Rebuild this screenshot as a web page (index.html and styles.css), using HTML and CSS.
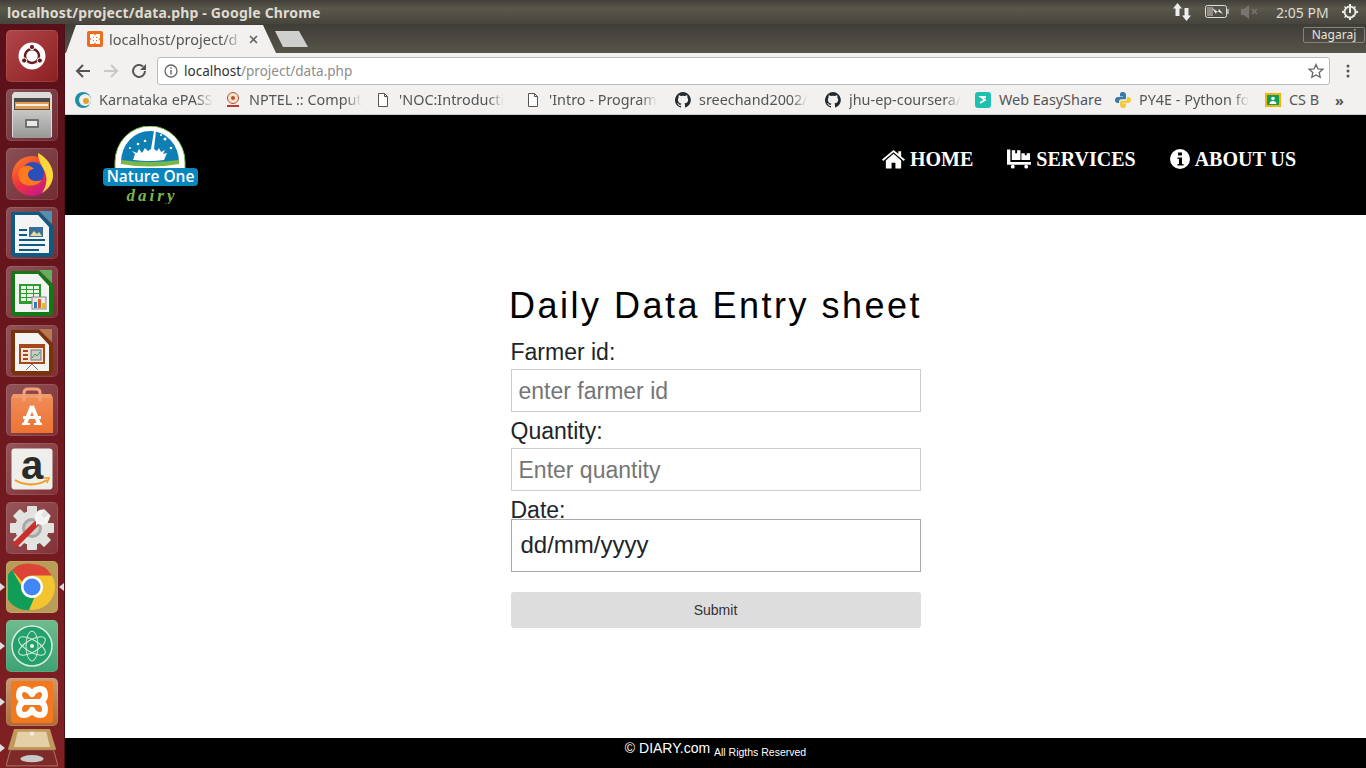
FILE: index.html
```html
<!DOCTYPE html>
<html lang="en">
<head>
  <meta charset="UTF-8" />
  <title>localhost/project/data.php</title>
  <link rel="stylesheet" href="styles.css">
</head>
<body>
  <div class="titlebar">
    <span class="window-title">localhost/project/data.php - Google Chrome</span>
    <div class="tray">
      <svg class="tray-net" width="18" height="18" viewBox="0 0 18 18"><path d="M4.500 0l4.500 5.500H6.500V13h-4V5.500H0zM13.500 18L9 12.500h2.500V5h4v7.500H18z" fill="#eee"/></svg>
      <svg class="tray-batt" width="24" height="14" viewBox="0 0 24 14"><rect x=".5" y=".5" width="21" height="12" rx="2" fill="none" stroke="#ddd"/><rect x="2" y="2" width="6" height="9" fill="#8f8d86"/><path d="M22 4h2v5h-2z" fill="#aaa"/><path d="M7 3l6 4 1-3 4 5-6-3-1 3z" fill="#eee"/></svg>
      <svg class="tray-vol" width="18" height="14" viewBox="0 0 18 14"><path d="M0 4h3l5-4v14l-5-4H0z" fill="#77756e"/><path d="M11 4l5 5m0-5l-5 5" stroke="#77756e" stroke-width="1.500"/></svg>
      <span class="clock">2:05 PM</span>
      <svg class="tray-gear" width="16" height="16" viewBox="0 0 16 16"><circle cx="8" cy="8" r="5.500" fill="none" stroke="#e8e8e8" stroke-width="2"/><path d="M8 3v6" stroke="#e8e8e8" stroke-width="2"/><path d="M7 0h2v3H7zM7 13h2v3H7zM0 7h3v2H0zM13 7h3v2h-3zM2 3l1-1 2 2-1 1zM12 11l1 1-1 1-2-2zM13 2l1 1-2 2-1-1zM4 11l1 1-2 2-1-1z" fill="#e8e8e8"/></svg>
    </div>
  </div>

  <div class="desktop">
    <nav class="launcher">
      <div class="tile tile-home">
        <svg width="40" height="40" viewBox="0 0 40 40"><circle cx="20" cy="20" r="13.500" fill="#fff"/><circle cx="20" cy="20" r="7" fill="none" stroke="#6d1a1f" stroke-width="2.500"/><circle cx="20" cy="11" r="2.600" stroke="#fff" fill="#6d1a1f"/><circle cx="12.200" cy="24.500" r="2.600" stroke="#fff" fill="#6d1a1f"/><circle cx="27.800" cy="24.500" r="2.600" stroke="#fff" fill="#6d1a1f"/></svg>
      </div>
      <div class="tile">
        <svg width="42" height="46" viewBox="0 0 42 46"><defs><linearGradient id="cab" x1="0" y1="0" x2="0" y2="1"><stop offset="0" stop-color="#c8c8c6"/><stop offset="1" stop-color="#989896"/></linearGradient></defs><path d="M3 0h36l2 3v42H1V3z" fill="#dcdcda"/><rect x="3" y="6" width="36" height="12" fill="#4a4a4a"/><rect x="4" y="10" width="34" height="7" fill="#e59a50"/><rect x="5" y="12" width="32" height="2" fill="#f7efe0"/><path d="M2 18h38v28H2z" fill="url(#cab)"/><rect x="14" y="27" width="14" height="9" rx="1" fill="#6f6f6f"/><rect x="16" y="29" width="10" height="5" fill="#e8e8e8"/></svg>
      </div>
      <div class="tile">
        <svg width="44" height="44" viewBox="0 0 44 44"><defs><linearGradient id="fx" x1="0" y1="0" x2=".7" y2="1"><stop offset="0" stop-color="#ff8a1f"/><stop offset=".55" stop-color="#f0343c"/><stop offset="1" stop-color="#c4178a"/></linearGradient></defs><circle cx="22" cy="24" r="20" fill="url(#fx)"/><path d="M28 1c8 4 16 13 15 24-1 8-6 13-11 16 5-8 6-15 2-23-2-4-6-10-6-17z" fill="#ffd73a"/><circle cx="23" cy="21" r="11" fill="#2b4fb8"/><path d="M9 18c6-6 12-5 15-1-3 0-6 2-6 6 0 4 6 8 14 5-4 6-15 8-21 2-3-3-3-8-2-12z" fill="#ff7a1f"/></svg>
      </div>
      <div class="tile">
        <svg width="42" height="48" viewBox="0 0 42 48"><path d="M0 3h28l14 14v28l-3 3H3l-3-3z" fill="#0d5a85"/><path d="M28 2l13 13V2z" fill="#4d92b5"/><path d="M4 6h23l11 12v26H4z" fill="#f4f4f4"/><path d="M8 20h8v2H8zM8 25h8v2H8zM8 30h26v2H8zM8 35h26v2H8zM8 40h20v2H8z" fill="#0d5a85"/><rect x="18" y="18" width="14" height="10" fill="#38709a"/><path d="M19 27l4-5 3 3 2-2 3 4z" fill="#e8d9a0"/></svg>
      </div>
      <div class="tile">
        <svg width="42" height="48" viewBox="0 0 42 48"><path d="M0 3h28l14 14v28l-3 3H3l-3-3z" fill="#107a14"/><path d="M28 2l13 13V2z" fill="#60b060"/><path d="M4 6h23l11 12v26H4z" fill="#f4f4f4"/><path d="M8 16h22v20H8z" fill="#2f9a2f"/><path d="M10 18h5v3h-5zM16 18h6v3h-6zM23 18h5v3h-5zM10 22h5v3h-5zM16 22h6v3h-6zM23 22h5v3h-5zM10 26h5v3h-5zM16 26h6v3h-6zM23 26h5v3h-5zM10 30h5v3h-5zM16 30h6v3h-6z" fill="#eaf5ea"/><rect x="21" y="29" width="14" height="12" fill="#e8e8e8" stroke="#888"/><path d="M23 34h3v6h-3z" fill="#2f7fc0"/><path d="M27 31h3v9h-3z" fill="#d9602a"/><path d="M31 35h3v5h-3z" fill="#e8b82c"/></svg>
      </div>
      <div class="tile">
        <svg width="42" height="48" viewBox="0 0 42 48"><path d="M0 3h28l14 14v28l-3 3H3l-3-3z" fill="#7a3308"/><path d="M28 2l13 13V2z" fill="#b67a50"/><path d="M4 6h23l11 12v26H4z" fill="#f4f4f4"/><rect x="8" y="17" width="26" height="20" fill="#a8481a"/><rect x="10" y="21" width="22" height="14" fill="#f4e6da"/><path d="M12 23h5v2h-5zM12 27h5v2h-5zM12 31h5v2h-5z" fill="#a8481a"/><rect x="20" y="23" width="10" height="10" fill="#ccc" stroke="#777"/><path d="M21 31l3-4 2 2 3-4" stroke="#3a9a3a" fill="none"/><path d="M21 37l-6 6m6-6l6 6" stroke="#777"/></svg>
      </div>
      <div class="tile">
        <svg width="42" height="46" viewBox="0 0 42 46"><defs><linearGradient id="bag" x1="0" y1="0" x2="0" y2="1"><stop offset="0" stop-color="#f08a55"/><stop offset="1" stop-color="#ec7433"/></linearGradient></defs><path d="M0 11h42v35H0z" fill="url(#bag)"/><path d="M0 11h42l-2-4H2z" fill="#f09a68"/><path d="M13 14V6q0-4 4-4h8q4 0 4 4v8" fill="none" stroke="#f4a27c" stroke-width="3"/><path d="M21 19l-7 18M21 19l7 18" stroke="#fff" stroke-width="4" fill="none"/><path d="M12 29h18v3H12z" fill="#fff"/><path d="M11 36h8v2h-8zM23 36h8v2h-8z" fill="#fff"/></svg>
      </div>
      <div class="tile">
        <svg width="52" height="52" viewBox="0 0 52 52"><rect x="5.500" y="5.500" width="41" height="41" rx="3" fill="#eeeeea"/><text class="amazon-a" x="26" y="36" text-anchor="middle">a</text><path d="M9 37c10 6 22 6 32 0" stroke="#f09a1f" stroke-width="2" fill="none"/><path d="M38 35l5 0-2 5" stroke="#f09a1f" stroke-width="1.500" fill="none"/></svg>
      </div>
      <div class="tile">
        <svg width="46" height="46" viewBox="0 0 46 46"><g fill="#e2e2e0"><circle cx="23" cy="23" r="17"/><rect x="18" y="1" width="10" height="44" rx="1"/><rect x="18" y="1" width="10" height="44" rx="1" transform="rotate(45 23 23)"/><rect x="18" y="1" width="10" height="44" rx="1" transform="rotate(90 23 23)"/><rect x="18" y="1" width="10" height="44" rx="1" transform="rotate(135 23 23)"/></g><circle cx="23" cy="23" r="10" fill="#a8a8a6"/><circle cx="23" cy="23" r="7" fill="#cfcfcd"/><path d="M7 39l22-22" stroke="#c9302c" stroke-width="6" stroke-linecap="round"/><path d="M27 17a8 8 0 0 1 9-12l-4 5 3 3 5-4a8 8 0 0 1-11 10l-2 2z" fill="#f4f4f4"/></svg>
      </div>
      <div class="tile tile-chrome">
        <span class="pip pip-left"></span><span class="pip pip-right"></span>
        <svg width="48" height="48" viewBox="0 0 48 48"><circle cx="24" cy="24" r="23" fill="#f4c430"/><path d="M24 1a23 23 0 0 1 20 11.500H24a11.500 11.500 0 0 0-10 6L4 7a23 23 0 0 1 20-6z" fill="#db4437"/><path d="M4 7l10 17a11.500 11.500 0 0 0 13 9L21 47A23 23 0 0 1 4 7z" fill="#0f9d58"/><circle cx="24" cy="24" r="11" fill="#fff"/><circle cx="24" cy="24" r="8.500" fill="#4285f4"/></svg>
      </div>
      <div class="tile tile-atom">
        <span class="pip pip-left"></span>
        <svg width="44" height="44" viewBox="0 0 44 44"><circle cx="22" cy="22" r="20" fill="#24a06a" stroke="#d8ece2" stroke-width="1.500"/><g fill="none" stroke="#d0ecdc" stroke-width="1"><ellipse cx="22" cy="22" rx="15" ry="6" transform="rotate(30 22 22)"/><ellipse cx="22" cy="22" rx="15" ry="6" transform="rotate(-30 22 22)"/><ellipse cx="22" cy="22" rx="15" ry="6" transform="rotate(90 22 22)"/></g><circle cx="22" cy="22" r="2" fill="#e8f5ee"/></svg>
      </div>
      <div class="tile tile-xampp">
        <span class="pip pip-left"></span>
        <svg width="42" height="42" viewBox="0 0 42 42"><rect width="42" height="42" rx="3" fill="#f3791f"/><g fill="none" stroke="#fff" stroke-width="6" stroke-linejoin="round" stroke-linecap="round"><path d="M21 13q-3-5-8-5-5 0-5 6 0 4 4 7-4 3-4 7 0 6 5 6 5 0 8-5"/><path d="M21 13q3-5 8-5 5 0 5 6 0 4-4 7 4 3 4 7 0 6-5 6-5 0-8-5"/><path d="M15 21h12"/></g></svg>
      </div>
      <div class="tile tile-trash">
        <span class="pip pip-left"></span>
        <svg width="58" height="41" viewBox="0 0 58 41"><path d="M5 23h48l5 18H0z" fill="#7d2a28" stroke="#a98272"/><path d="M9 0h40l7 23H2z" fill="#c09a5c"/><path d="M13 3h32l4 17H9z" fill="#e4cfa6"/><rect x="27" y="3" width="4" height="4" fill="#f4f0e6"/><ellipse cx="29" cy="33" rx="13" ry="4" fill="#c8c8c8"/></svg>
      </div>
    </nav>

    <div class="browser">
      <div class="tabstrip">
        <div class="tab">
          <svg width="16" height="16" viewBox="0 0 16 16"><rect width="16" height="16" rx="2" fill="#ee6c1b"/><path d="M3 3h3q2 0 2 2 0-2 2-2h3v4l-1.500 1L13 9v4h-3q-2 0-2-2 0 2-2 2H3V9l1.500-1L3 7z" fill="#fff"/><path d="M6 6h1v1H6zM9 6h1v1H9zM6 9h1v1H6zM9 9h1v1H9z" fill="#ee6c1b"/></svg>
          <span class="tab-title">localhost/project/d</span>
          <svg class="tab-close" width="9" height="9" viewBox="0 0 9 9"><path d="M1 1l7 7m0-7L1 8" stroke="#666" stroke-width="1.600"/></svg>
        </div>
        <div class="new-tab"></div>
        <div class="profile">Nagaraj</div>
      </div>

      <div class="toolbar">
        <svg class="nav-btn" width="16" height="16" viewBox="0 0 16 16"><path d="M15 8H2m6-6L2 8l6 6" fill="none" stroke="#555" stroke-width="2"/></svg>
        <svg class="nav-btn" width="16" height="16" viewBox="0 0 16 16"><path d="M1 8h13M8 2l6 6-6 6" fill="none" stroke="#c8c8c8" stroke-width="2"/></svg>
        <svg class="nav-btn" width="16" height="16" viewBox="0 0 16 16"><path d="M14 8a6 6 0 1 1-2-4.500" fill="none" stroke="#555" stroke-width="2"/><path d="M15 1v6H9z" fill="#555"/></svg>
        <div class="omnibox">
          <svg width="14" height="14" viewBox="0 0 14 14"><circle cx="7" cy="7" r="6" fill="none" stroke="#666" stroke-width="1.300"/><path d="M6.300 6h1.400v4.500H6.300zM6.300 3.300h1.400v1.400H6.300z" fill="#666"/></svg>
          <span class="url"><b>localhost</b>/project/data.php</span>
          <svg class="star" width="16" height="16" viewBox="0 0 16 16"><path d="M8 1.500l2 4.400 4.800.5-3.600 3.200 1 4.700L8 11.900l-4.200 2.400 1-4.700L1.200 6.400 6 5.900z" fill="none" stroke="#666" stroke-width="1.300"/></svg>
        </div>
        <svg class="menu-dots" width="4" height="14" viewBox="0 0 4 14"><circle cx="2" cy="2" r="1.500" fill="#555"/><circle cx="2" cy="7" r="1.500" fill="#555"/><circle cx="2" cy="12" r="1.500" fill="#555"/></svg>
      </div>

      <div class="bookmarks">
        <div class="bookmark">
          <svg width="16" height="16" viewBox="0 0 16 16"><circle cx="8" cy="8" r="8" fill="#1f8fa8"/><circle cx="10" cy="8" r="6" fill="#f2f1f0"/><circle cx="11" cy="9" r="3" fill="#e0a030"/></svg>
          <span class="bm-text">Karnataka ePASS</span>
        </div>
        <div class="bookmark">
          <svg width="16" height="16" viewBox="0 0 16 16"><circle cx="8" cy="6" r="5.500" fill="#f4e4c8" stroke="#b8503a"/><circle cx="8" cy="6" r="2" fill="#b8503a"/><path d="M2 13h12v2H2z" fill="#c0392b"/></svg>
          <span class="bm-text">NPTEL :: Comput</span>
        </div>
        <div class="bookmark">
          <svg width="16" height="16" viewBox="0 0 16 16"><path d="M3.500 1.500h6l3 3v10h-9zM9.500 1.500v3h3" fill="#fff" stroke="#555"/></svg>
          <span class="bm-text">'NOC:Introducti</span>
        </div>
        <div class="bookmark">
          <svg width="16" height="16" viewBox="0 0 16 16"><path d="M3.500 1.500h6l3 3v10h-9zM9.500 1.500v3h3" fill="#fff" stroke="#555"/></svg>
          <span class="bm-text">'Intro - Program</span>
        </div>
        <div class="bookmark">
          <svg width="16" height="16" viewBox="0 0 16 16"><path d="M8 0a8 8 0 0 0-2.500 15.600c.4.100.5-.2.500-.4v-1.400c-2.200.5-2.700-1-2.700-1-.4-.9-.9-1.200-.9-1.200-.7-.5.100-.5.100-.5.800.1 1.200.8 1.200.8.700 1.200 1.900.9 2.300.7.100-.5.300-.9.500-1.100-1.800-.2-3.600-.9-3.600-4 0-.9.300-1.600.8-2.100-.1-.2-.4-1 .1-2.100 0 0 .7-.2 2.200.8a7.600 7.600 0 0 1 4 0c1.500-1 2.200-.8 2.200-.8.400 1.100.2 1.900.1 2.100.5.600.8 1.300.8 2.100 0 3.100-1.900 3.700-3.700 3.900.3.300.6.700.6 1.500v2.200c0 .2.100.5.600.4A8 8 0 0 0 8 0z" fill="#24292e"/></svg>
          <span class="bm-text">sreechand2002/</span>
        </div>
        <div class="bookmark">
          <svg width="16" height="16" viewBox="0 0 16 16"><path d="M8 0a8 8 0 0 0-2.500 15.600c.4.100.5-.2.500-.4v-1.400c-2.200.5-2.700-1-2.700-1-.4-.9-.9-1.200-.9-1.200-.7-.5.100-.5.100-.5.800.1 1.200.8 1.200.8.700 1.200 1.900.9 2.300.7.100-.5.300-.9.500-1.100-1.800-.2-3.600-.9-3.600-4 0-.9.300-1.600.8-2.100-.1-.2-.4-1 .1-2.100 0 0 .7-.2 2.200.8a7.600 7.600 0 0 1 4 0c1.500-1 2.200-.8 2.200-.8.400 1.100.2 1.900.1 2.100.5.600.8 1.300.8 2.100 0 3.100-1.900 3.700-3.700 3.900.3.300.6.700.6 1.500v2.200c0 .2.100.5.600.4A8 8 0 0 0 8 0z" fill="#24292e"/></svg>
          <span class="bm-text">jhu-ep-coursera/</span>
        </div>
        <div class="bookmark bookmark-short">
          <svg width="16" height="16" viewBox="0 0 16 16"><rect width="16" height="16" rx="3" fill="#1fc0b0"/><path d="M11 5H6l4 3-5 3" fill="none" stroke="#fff" stroke-width="1.800"/></svg>
          <span class="bm-text">Web EasyShare</span>
        </div>
        <div class="bookmark">
          <svg width="16" height="16" viewBox="0 0 16 16"><path d="M8 0C5 0 5 1.500 5 3v1.500h3.200V5H3C1 5 0 6.500 0 8.200S1 11 3 11h1V9.500C4 8 5 7.300 6.500 7.300h3c1 0 1.500-.7 1.500-1.600V3c0-2-1.500-3-3-3z" fill="#3a78aa"/><path d="M8 16c3 0 3-1.500 3-3v-1.500H7.800V11H13c2 0 3-1.500 3-3.200S15 5 13 5h-1v1.500C12 8 11 8.700 9.500 8.700h-3C5.500 8.700 5 9.400 5 10.300V13c0 2 1.500 3 3 3z" fill="#f5c93a"/></svg>
          <span class="bm-text">PY4E - Python fo</span>
        </div>
        <div class="bookmark bookmark-tiny">
          <svg width="16" height="16" viewBox="0 0 16 16"><rect y="1" width="16" height="14" fill="#f4b400"/><rect x="2" y="3" width="12" height="10" fill="#0f9d58"/><circle cx="8" cy="6.500" r="1.800" fill="#fff"/><path d="M4.500 12c0-4 7-4 7 0z" fill="#fff"/></svg>
          <span class="bm-text">CS B</span>
        </div>
        <span class="bm-more">»</span>
      </div>

      <div class="page">
        <header class="site-header">
          <svg class="logo" width="96" height="78" viewBox="0 0 96 78">
            <path d="M12 44V36a35 36 0 0 1 70 0v8z" fill="#fff" stroke="#7ab648" stroke-width="1"/>
            <path d="M18 36a29 31 0 0 1 58 0q-29 4-58 0z" fill="#0d7fb5"/>
            <path d="M18 34q29 4 58 0v4q-29 5-58 0z" fill="#7ab648"/>
            <path d="M30 34l2-6-3-3 5 2 2-4 3 4 3-5 3 3 3-2 3-18 2 0-2 18 3 2 2-3 2 4 4-2-2 4 4-1-3 7q-15 2-30 0z" fill="#fff"/>
            <g fill="#fff"><circle cx="35" cy="18" r="1.300"/><circle cx="42" cy="15" r="1.300"/><circle cx="62" cy="13" r="1.500"/><circle cx="58" cy="9" r="1"/><circle cx="68" cy="22" r="1.300"/><circle cx="27" cy="22" r="1"/></g>
            <rect y="42" width="95" height="18" rx="4" fill="#0a86bf"/>
            <text class="logo-name" x="47.500" y="56" text-anchor="middle">Nature One</text>
            <text class="logo-sub" x="49" y="75" text-anchor="middle">dairy</text>
          </svg>
          <ul class="site-nav">
            <li>
              <svg width="23" height="20" viewBox="0 0 24 20"><path d="M12 4.500L4 11.500V19a1 1 0 0 0 1 1h5v-6h4v6h5a1 1 0 0 0 1-1v-7.500z" fill="#fff"/><path d="M0 10.500L12 .5l5 4V2h3v5.500l4 3-1.300 1.500L12 3 1.300 12z" fill="#fff"/></svg>
              HOME
            </li>
            <li>
              <svg width="24" height="20" viewBox="0 0 25 20"><path d="M0 0h3.500v13H25v3H0z" fill="#fff"/><path d="M5 1h3.500v3h2V1H14v10H5zM15 4h3.500v2h2V4H24v7h-9z" fill="#fff"/><circle cx="6" cy="18" r="2" fill="#fff"/><circle cx="20" cy="18" r="2" fill="#fff"/></svg>
              SERVICES
            </li>
            <li>
              <svg width="20" height="20" viewBox="0 0 20 20"><circle cx="10" cy="10" r="10" fill="#fff"/><path d="M8 3.500h4v3H8zM7.500 8.500H12v6.500h1.500v1.500h-6V15H9v-5H7.500z" fill="#000"/></svg>
              ABOUT US
            </li>
          </ul>
        </header>

        <main class="content">
          <form class="entry-form">
            <h1>Daily Data Entry sheet</h1>
            <label>Farmer id:</label>
            <input type="text" placeholder="enter farmer id">
            <label>Quantity:</label>
            <input type="text" placeholder="Enter quantity">
            <label>Date:</label>
            <div class="date-field">dd/mm/yyyy</div>
            <button type="button">Submit</button>
          </form>
        </main>

        <footer class="site-footer">
          <span>© DIARY.com</span> <small>All Rigths Reserved</small>
        </footer>
      </div>
    </div>
  </div>
</body>
</html>
```

FILE: styles.css
```css
* {
  box-sizing: border-box;
}
html, body {
  margin: 0;
  height: 100%;
  overflow: hidden;
}
body {
  display: flex;
  flex-direction: column;
  width: 1366px;
  height: 768px;
  font-family: "Liberation Sans", sans-serif;
}

/* desktop panel */
.titlebar {
  display: flex;
  align-items: center;
  height: 24px;
  flex: none;
  padding-left: 7px;
  background: linear-gradient(#413f39, #5a574c 35%, #46443c);
  color: #dfdbd2;
}
.window-title {
  font: bold 14px "Noto Sans", sans-serif;
  letter-spacing: .17px;
}
.tray {
  display: flex;
  align-items: center;
  margin-left: auto;
}
.tray-net {
  margin-right: 14px;
}
.tray-batt {
  margin-right: 12px;
}
.tray-vol {
  margin-right: 17px;
}
.clock {
  font: 14px "Noto Sans", sans-serif;
  width: 53px;
  margin-right: 13px;
  white-space: nowrap;
}
.tray-gear {
  margin-right: 8px;
}
.desktop {
  display: flex;
  flex: 1;
  min-height: 0;
}

/* launcher */
.launcher {
  display: flex;
  flex-direction: column;
  align-items: center;
  gap: 7px;
  flex: none;
  width: 65px;
  padding: 6px 7px 0 6px;
  overflow: hidden;
  background: linear-gradient(#5a1019, #7f2024);
  border-right: 1px solid #4e1016;
}
.tile {
  position: relative;
  display: flex;
  align-items: center;
  justify-content: center;
  flex: none;
  width: 52px;
  height: 52px;
  border-radius: 5px;
  background: linear-gradient(135deg, rgba(255,255,255,.26), rgba(255,255,255,.1));
  box-shadow: inset 0 0 0 1px rgba(255,255,255,.1);
}
.tile-home {
  background: linear-gradient(135deg, #b0474a, #8d1f22);
}
.tile-chrome {
  background: #b89c58;
}
.tile-atom {
  background: linear-gradient(#6fbb8e, #3fa274);
}
.tile-xampp {
  height: 48px;
  margin-top: -1px;
  background: linear-gradient(#c99a72, #b06a36);
}
.tile-trash {
  background: none;
  box-shadow: none;
  height: 41px;
  margin-top: -6px;
  align-items: flex-start;
}
.amazon-a {
  fill: #2a2a2a;
  font: bold 40px "Liberation Sans", sans-serif;
}
.pip {
  position: absolute;
  top: 50%;
  width: 0;
  height: 0;
  margin-top: -4px;
  border-top: 4px solid transparent;
  border-bottom: 4px solid transparent;
}
.pip-left {
  left: -6px;
  border-left: 5px solid #ddd;
}
.pip-right {
  right: -6px;
  border-right: 5px solid #ddd;
}

/* chrome */
.browser {
  display: flex;
  flex-direction: column;
  flex: 1;
  min-width: 0;
}
.tabstrip {
  display: flex;
  align-items: flex-end;
  height: 29px;
  flex: none;
  background: linear-gradient(#3f3d37, #57544a);
}
.tab {
  display: flex;
  align-items: center;
  width: 210px;
  height: 28px;
  margin-left: 1px;
  padding: 0 18px 0 21px;
  background: #f2f1f0;
  clip-path: polygon(0 100%, 10px 0, 197px 0, 100% 100%);
  color: #555;
}
.tab-title {
  flex: 1;
  margin-left: 6px;
  overflow: hidden;
  white-space: nowrap;
  font: 14.500px "Noto Sans", sans-serif;
  -webkit-mask-image: linear-gradient(to right, #000 85%, transparent);
  mask-image: linear-gradient(to right, #000 85%, transparent);
}
.tab-close {
  margin-left: 6px;
}
.new-tab {
  width: 33px;
  height: 16px;
  margin: 0 0 6px -1px;
  background: #cfcfcd;
  clip-path: polygon(0 0, 24px 0, 100% 100%, 8px 100%);
}
.profile {
  align-self: flex-start;
  width: 62px;
  height: 16px;
  margin: 3px 1px 0 auto;
  border: 1px solid #85827a;
  border-radius: 2px;
  color: #e6e3dc;
  font: 12px/14px "Noto Sans", sans-serif;
  text-align: center;
}
.toolbar {
  display: flex;
  align-items: center;
  height: 33px;
  flex: none;
  padding: 3px 0 0 10px;
  background: #f2f1f0;
}
.nav-btn {
  margin-right: 12px;
}
.nav-btn:nth-child(3) {
  margin-right: 10px;
}
.omnibox {
  display: flex;
  align-items: center;
  width: 1173px;
  height: 28px;
  padding: 0 5px 0 6px;
  background: #fff;
  border: 1px solid #bbb;
  border-radius: 3px;
}
.url {
  margin-left: 6px;
  color: #8c8c8c;
  font: 13.500px "Noto Sans", sans-serif;
}
.url b {
  color: #333;
  font-weight: normal;
}
.star {
  margin-left: auto;
}
.menu-dots {
  margin-left: 16px;
}
.bookmarks {
  display: flex;
  align-items: center;
  height: 29px;
  flex: none;
  padding-left: 10px;
  gap: 12px;
  background: #f2f1f0;
  border-bottom: 1px solid #cfcdca;
  color: #555;
  font: 14.400px "Noto Sans", sans-serif;
}
.bookmark {
  display: flex;
  align-items: center;
  gap: 8px;
  flex: none;
  width: 138px;
}
.bookmark svg {
  flex: none;
}
.bm-text {
  margin-top: -2px;
  overflow: hidden;
  white-space: nowrap;
  -webkit-mask-image: linear-gradient(to right, #000 85%, transparent);
  mask-image: linear-gradient(to right, #000 85%, transparent);
}
.bookmark-short {
  width: 128px;
}
.bookmark-short .bm-text, .bookmark-tiny .bm-text {
  -webkit-mask-image: none;
  mask-image: none;
}
.bookmark-tiny {
  width: 55px;
}
.bm-more {
  margin-left: 3px;
  font-weight: bold;
}

/* the site itself */
.page {
  display: flex;
  flex-direction: column;
  flex: 1;
  min-height: 0;
  background: #fff;
}
.site-header {
  display: flex;
  align-items: center;
  justify-content: space-between;
  height: 100px;
  flex: none;
  padding: 0 70px 0 38px;
  background: #000;
}
.logo-name {
  fill: #fff;
  font: 600 15.500px "Open Sans", sans-serif;
}
.logo-sub {
  fill: #7ab648;
  font: italic bold 17px "Liberation Serif", serif;
  letter-spacing: 3px;
}
.site-nav {
  display: flex;
  gap: 34px;
  margin: 0 0 12px;
  padding: 0;
  list-style: none;
}
.site-nav li {
  display: flex;
  align-items: center;
  gap: 5px;
  color: #fff;
  font: bold 20px "Liberation Serif", serif;
}
.site-nav li:first-child {
  margin-right: 0;
}
.content {
  flex: 1;
  display: flex;
  justify-content: center;
  min-height: 0;
}
.entry-form {
  display: flex;
  flex-direction: column;
  width: 410px;
  padding-top: 68px;
}
h1 {
  margin: 0 -4px 0;
  height: 56px;
  color: #000;
  font-size: 36px;
  font-weight: normal;
  line-height: 46px;
  letter-spacing: 2.500px;
  text-align: center;
  white-space: nowrap;
}
label {
  height: 25px;
  color: #212529;
  font-size: 23px;
  line-height: 27px;
}
input {
  height: 43px;
  margin: 5px 0 6px;
  padding: 1px 7px 0;
  border: 1px solid #ccc;
  font: 23px "Liberation Sans", sans-serif;
}
input::placeholder {
  color: #757575;
  opacity: 1;
}
.date-field {
  height: 53px;
  margin-top: -3px;
  padding: 0 9px;
  border: 1px solid #a9a9a9;
  color: #212529;
  font-size: 24px;
  line-height: 50px;
}
button {
  height: 36px;
  margin-top: 20px;
  background: #ddd;
  border: none;
  border-radius: 3px;
  color: #333;
  font: 14px "Liberation Sans", sans-serif;
}
.site-footer {
  height: 30px;
  flex: none;
  background: #000;
  color: #fff;
  font-size: 14px;
  line-height: 20px;
  text-align: center;
}
.site-footer small {
  font-size: 10.500px;
  vertical-align: -3px;
}
```
